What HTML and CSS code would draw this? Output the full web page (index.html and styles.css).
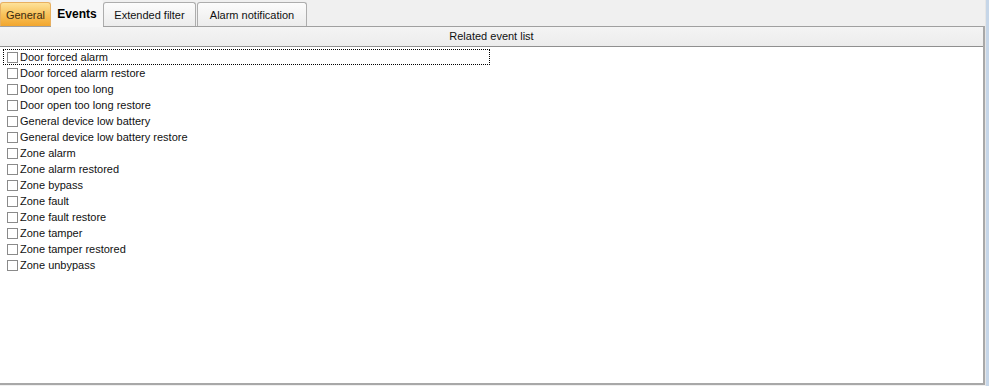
FILE: index.html
```html
<!DOCTYPE html>
<html>
<head>
<meta charset="utf-8">
<link rel="stylesheet" href="styles.css">
</head>
<body>
<div class="window">
  <div class="main">
    <div class="tabs">
      <div class="tab tab-general">General</div>
      <div class="tab tab-active">Events</div>
      <div class="tab tab-ext">Extended filter</div>
      <div class="tab tab-alarm">Alarm notification</div>
    </div>
    <div class="panel">
      <div class="header">Related event list</div>
      <div class="list">
        <div class="row focused"><span class="cb"></span><span class="label">Door forced alarm</span></div>
        <div class="row"><span class="cb"></span><span class="label">Door forced alarm restore</span></div>
        <div class="row"><span class="cb"></span><span class="label">Door open too long</span></div>
        <div class="row"><span class="cb"></span><span class="label">Door open too long restore</span></div>
        <div class="row"><span class="cb"></span><span class="label">General device low battery</span></div>
        <div class="row"><span class="cb"></span><span class="label">General device low battery restore</span></div>
        <div class="row"><span class="cb"></span><span class="label">Zone alarm</span></div>
        <div class="row"><span class="cb"></span><span class="label">Zone alarm restored</span></div>
        <div class="row"><span class="cb"></span><span class="label">Zone bypass</span></div>
        <div class="row"><span class="cb"></span><span class="label">Zone fault</span></div>
        <div class="row"><span class="cb"></span><span class="label">Zone fault restore</span></div>
        <div class="row"><span class="cb"></span><span class="label">Zone tamper</span></div>
        <div class="row"><span class="cb"></span><span class="label">Zone tamper restored</span></div>
        <div class="row"><span class="cb"></span><span class="label">Zone unbypass</span></div>
      </div>
    </div>
  </div>
  <div class="edge"></div>
</div>
</body>
</html>
```

FILE: styles.css
```css
html, body {
  margin: 0;
  padding: 0;
  background: #f0f0f0;
}
body {
  font-family: "Liberation Sans", Arial, sans-serif;
  font-size: 11px;
  color: #000;
  width: 989px;
  height: 386px;
  overflow: hidden;
}
.window {
  display: flex;
  width: 989px;
  height: 386px;
}
.main {
  width: 985px;
  display: flex;
  flex-direction: column;
}
.edge {
  width: 4px;
  background: linear-gradient(to right, #e6e6e6 0, #e6e6e6 1px, #c6d6e8 1px, #c6d6e8 100%);
}
.tabs {
  display: flex;
  align-items: flex-end;
  height: 26px;
}
.tab {
  box-sizing: border-box;
  height: 24px;
  display: flex;
  align-items: center;
  justify-content: center;
  border: 1px solid #adadad;
  border-bottom: none;
  border-radius: 3px 3px 0 0;
  background: linear-gradient(to bottom, #fcfcfc 0%, #ececec 100%);
  color: #111;
  font-size: 11px;
}
.tab-general {
  width: 51px;
  background: linear-gradient(to bottom, #fde29a 0%, #f8c25a 50%, #f2a62e 100%);
  border-color: #e8b060;
  color: #3a2a10;
}
.tab-active {
  width: 52px;
  height: 27px;
  margin-bottom: -1px;
  background: #f7f7f7;
  border-color: #f7f7f7;
  font-weight: bold;
  font-size: 12px;
  color: #000;
  position: relative;
  z-index: 1;
}
.tab-ext {
  width: 93px;
}
.tab-alarm {
  width: 110px;
  margin-left: 1px;
}
.panel {
  flex: 1;
  display: flex;
  flex-direction: column;
  border-top: 1px solid #a0a0a0;
  border-right: 2px solid #a8a8a8;
  border-bottom: 2px solid #a8a8a8;
  margin-bottom: 1px;
}
.header {
  height: 19px;
  line-height: 19px;
  text-align: center;
  background: linear-gradient(to bottom, #f4f4f4 0%, #ececec 100%);
  border-bottom: 1px solid #8f8f8f;
  font-size: 11px;
  color: #111;
}
.list {
  flex: 1;
  background: #fff;
  padding-top: 2px;
  padding-left: 3px;
}
.row {
  box-sizing: border-box;
  height: 16px;
  width: 487px;
  display: flex;
  align-items: center;
  border: 1px dotted transparent;
}
.row.focused {
  border: 1px dotted #000;
}
.cb {
  box-sizing: border-box;
  width: 11px;
  height: 11px;
  border: 1px solid #8a8a8a;
  background: #fff;
  margin-left: 3px;
  margin-right: 2px;
  flex: none;
}
.label {
  color: #111;
  white-space: nowrap;
}
```
